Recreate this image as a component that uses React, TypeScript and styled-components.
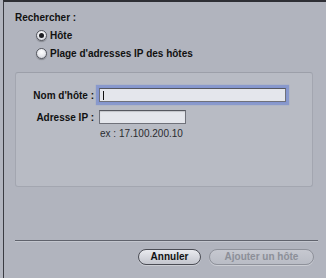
import React from 'react';
import styled, { createGlobalStyle } from 'styled-components';

const GlobalStyle = createGlobalStyle`
  html, body {
    margin: 0;
    padding: 0;
    background: #b2b5bf;
  }
  body {
    font-family: "Liberation Sans", "DejaVu Sans", sans-serif;
    font-size: 10px;
    color: #111;
  }
`;

const Sheet = styled.div`
  box-sizing: border-box;
  width: 323px;
  height: 278px;
  margin-left: 3px;
  border-top: 2px solid #2e2f35;
  border-left: 1px solid #3a3b42;
  background: #b1b4be;
  display: flex;
  flex-direction: column;
  padding: 10px 0 0 11px;
`;

const Caption = styled.div`
  font-weight: bold;
  font-size: 10px;
  line-height: 12px;
  height: 12px;
`;

const RadioList = styled.div`
  display: flex;
  flex-direction: column;
  padding: 2px 0 0 21px;
`;

const RadioRow = styled.label`
  display: flex;
  align-items: center;
  gap: 3px;
  height: 18px;
  font-weight: bold;
  font-size: 10px;
`;

const RadioDot = styled.span<{ $checked?: boolean }>`
  box-sizing: border-box;
  width: 11px;
  height: 11px;
  border-radius: 50%;
  border: 1px solid #55575f;
  background: radial-gradient(circle at 50% 35%, #ffffff 0%, #e6e7ec 55%, #c4c6cf 100%);
  box-shadow: 0 1px 1px rgba(0, 0, 0, 0.25);
  display: flex;
  align-items: center;
  justify-content: center;

  &::after {
    content: '';
    display: ${(p) => (p.$checked ? 'block' : 'none')};
    width: 5px;
    height: 5px;
    border-radius: 50%;
    background: #1c1d22;
  }
`;

const Group = styled.div`
  box-sizing: border-box;
  margin-top: 10px;
  width: 298px;
  height: 115px;
  border: 1px solid #a3a6b0;
  border-top-color: #9c9fa9;
  border-radius: 3px;
  background: #b8bbc4;
  padding: 15px 0 0 0;
  display: flex;
  flex-direction: column;
`;

const FieldRow = styled.div`
  display: flex;
  align-items: center;
  gap: 5px;
  height: 14px;
  margin-bottom: 8px;
`;

const FieldLabel = styled.span`
  width: 78px;
  text-align: right;
  font-weight: bold;
  font-size: 10px;
  white-space: nowrap;
`;

const TextField = styled.div<{ $width: number; $focused?: boolean }>`
  box-sizing: border-box;
  width: ${(p) => p.$width}px;
  height: 14px;
  background: #e4e6ec;
  border: 1px solid #6f717a;
  border-top-color: #55575f;
  position: relative;
  box-shadow: ${(p) =>
    p.$focused
      ? '0 0 0 1px #8395d0, 0 0 1px 3px rgba(105, 130, 210, 0.6)'
      : 'inset 0 1px 1px rgba(0,0,0,0.15)'};
`;

const Caret = styled.span`
  position: absolute;
  left: 3px;
  top: 2px;
  width: 1px;
  height: 9px;
  background: #111;
`;

const Hint = styled.div`
  margin: -4px 0 0 84px;
  font-size: 10px;
  color: #2a2b30;
  line-height: 12px;
`;

const Separator = styled.div`
  margin: 53px 0 0 0;
  width: 303px;
  height: 1px;
  background: #60636d;
  border-bottom: 1px solid #c4c7cf;
`;

const ButtonBar = styled.div`
  display: flex;
  justify-content: flex-end;
  gap: 8px;
  width: 299px;
  margin-top: 7px;
`;

const Button = styled.button<{ $width: number; $disabled?: boolean }>`
  box-sizing: border-box;
  width: ${(p) => p.$width}px;
  height: 16px;
  padding: 0;
  border-radius: 8px;
  font-family: "Liberation Sans", "DejaVu Sans", sans-serif;
  font-size: 10px;
  font-weight: bold;
  line-height: 14px;
  color: ${(p) => (p.$disabled ? '#8c8f98' : '#111')};
  border: 1px solid ${(p) => (p.$disabled ? '#8e919a' : '#4b4d55')};
  background: ${(p) =>
    p.$disabled
      ? 'linear-gradient(#c6c8d0, #b9bcc5)'
      : 'linear-gradient(#e9eaef, #c3c5cd)'};
  box-shadow: 0 1px 0 rgba(255, 255, 255, 0.35);
`;

export default function App() {
  return (
    <>
      <GlobalStyle />
      <Sheet>
        <Caption>Rechercher :</Caption>
        <RadioList>
          <RadioRow>
            <RadioDot $checked />
            Hôte
          </RadioRow>
          <RadioRow>
            <RadioDot />
            Plage d'adresses IP des hôtes
          </RadioRow>
        </RadioList>
        <Group>
          <FieldRow>
            <FieldLabel>Nom d'hôte :</FieldLabel>
            <TextField $width={187} $focused>
              <Caret />
            </TextField>
          </FieldRow>
          <FieldRow>
            <FieldLabel>Adresse IP :</FieldLabel>
            <TextField $width={87} />
          </FieldRow>
          <Hint>ex : 17.100.200.10</Hint>
        </Group>
        <Separator />
        <ButtonBar>
          <Button $width={63}>Annuler</Button>
          <Button $width={105} $disabled>
            Ajouter un hôte
          </Button>
        </ButtonBar>
      </Sheet>
    </>
  );
}
